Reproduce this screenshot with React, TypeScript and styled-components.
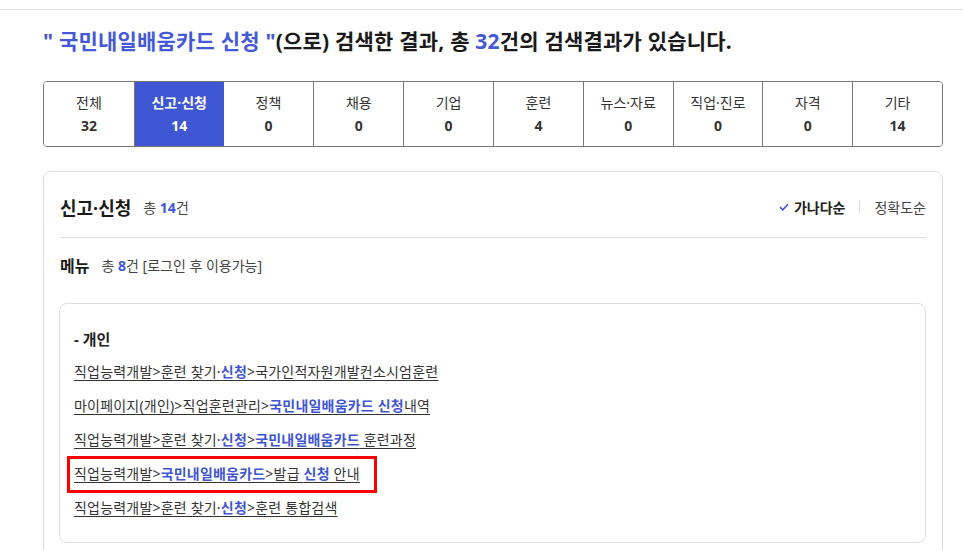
import styled, { createGlobalStyle } from "styled-components";

const GlobalStyle = createGlobalStyle`
  body {
    margin: 0;
    background: #ffffff;
    font-family: "Noto Sans", "Noto Sans CJK KR", sans-serif;
    color: #222222;
  }
  * { box-sizing: border-box; }
`;

const tabs = [
  { label: "전체", count: 32 },
  { label: "신고·신청", count: 14, active: true },
  { label: "정책", count: 0 },
  { label: "채용", count: 0 },
  { label: "기업", count: 0 },
  { label: "훈련", count: 4 },
  { label: "뉴스·자료", count: 0 },
  { label: "직업·진로", count: 0 },
  { label: "자격", count: 0 },
  { label: "기타", count: 14 },
];

type Part = { t: string; hl?: boolean };

const links: { parts: Part[]; marked?: boolean }[] = [
  {
    parts: [
      { t: "직업능력개발>훈련 찾기·" },
      { t: "신청", hl: true },
      { t: ">국가인적자원개발컨소시엄훈련" },
    ],
  },
  {
    parts: [
      { t: "마이페이지(개인)>직업훈련관리>" },
      { t: "국민내일배움카드 신청", hl: true },
      { t: "내역" },
    ],
  },
  {
    parts: [
      { t: "직업능력개발>훈련 찾기·" },
      { t: "신청", hl: true },
      { t: ">" },
      { t: "국민내일배움카드", hl: true },
      { t: " 훈련과정" },
    ],
  },
  {
    parts: [
      { t: "직업능력개발>" },
      { t: "국민내일배움카드", hl: true },
      { t: ">발급 " },
      { t: "신청", hl: true },
      { t: " 안내" },
    ],
    marked: true,
  },
  {
    parts: [
      { t: "직업능력개발>훈련 찾기·" },
      { t: "신청", hl: true },
      { t: ">훈련 통합검색" },
    ],
  },
];

const App = (): JSX.Element => {
  return (
    <>
      <GlobalStyle />
      <TopLine />
      <Page>
        <SearchTitle>
          <Blue>" 국민내일배움카드 신청 "</Blue>(으로) 검색한 결과, 총 <Blue>32</Blue>건의 검색결과가 있습니다.
        </SearchTitle>

        <TabBar>
          {tabs.map((tab) => (
            <Tab key={tab.label} $active={!!tab.active}>
              <TabLabel>{tab.label}</TabLabel>
              <TabCount>{tab.count}</TabCount>
            </Tab>
          ))}
        </TabBar>

        <ResultBox>
          <ResultHead>
            <HeadLeft>
              <ResultTitle>신고·신청</ResultTitle>
              <Total>
                총 <strong>14</strong>건
              </Total>
            </HeadLeft>
            <SortList>
              <SortItem $on>
                <svg width="10" height="8" viewBox="0 0 10 8">
                  <path d="M1 4.2 L3.8 6.8 L9 1.2" fill="none" stroke="#3f56d3" strokeWidth="1.6" />
                </svg>
                가나다순
              </SortItem>
              <SortDivider />
              <SortItem>정확도순</SortItem>
            </SortList>
          </ResultHead>

          <MenuHead>
            <MenuTitle>메뉴</MenuTitle>
            <Total>
              총 <strong>8</strong>건 [로그인 후 이용가능]
            </Total>
          </MenuHead>

          <LinkBox>
            <GroupTitle>- 개인</GroupTitle>
            <LinkList>
              {links.map((link, i) => (
                <LinkRow key={i}>
                  <LinkText href="#" $marked={!!link.marked}>
                    {link.parts.map((p, j) =>
                      p.hl ? <Hl key={j}>{p.t}</Hl> : <span key={j}>{p.t}</span>
                    )}
                  </LinkText>
                </LinkRow>
              ))}
            </LinkList>
          </LinkBox>
        </ResultBox>
      </Page>
    </>
  );
};

export default App;

const TopLine = styled.div`
  height: 10px;
  border-bottom: 1px solid #dddddd;
`;

const Page = styled.main`
  padding: 0 20px 0 43px;
`;

const SearchTitle = styled.h2`
  margin: 16px 0 0 0;
  font-size: 21px;
  line-height: 30px;
  font-weight: 700;
  letter-spacing: 0.2px;
  color: #1a1a1a;
`;

const Blue = styled.span`
  color: #4459d8;
`;

const TabBar = styled.div`
  margin-top: 25px;
  height: 66px;
  display: grid;
  grid-template-columns: repeat(10, 1fr);
  border: 1px solid #777777;
  border-radius: 4px;
  overflow: hidden;
`;

const Tab = styled.div<{ $active: boolean }>`
  display: flex;
  flex-direction: column;
  align-items: center;
  justify-content: center;
  gap: 1px;
  border-left: 1px solid #777777;
  background: ${(p) => (p.$active ? "#3f56d3" : "#ffffff")};
  color: ${(p) => (p.$active ? "#ffffff" : "#333333")};
  font-weight: ${(p) => (p.$active ? 700 : 400)};

  &:first-child {
    border-left: none;
  }

  ${(p) => (p.$active ? "& + div { border-left: none; }" : "")}
`;

const TabLabel = styled.span`
  font-size: 14px;
  line-height: 22px;
`;

const TabCount = styled.span`
  font-size: 14px;
  line-height: 22px;
  font-weight: 700;
`;

const ResultBox = styled.section`
  margin-top: 24px;
  border: 1px solid #dddddd;
  border-radius: 8px;
  padding: 0 16px 0 16px;
  height: 400px;
`;

const ResultHead = styled.div`
  display: flex;
  justify-content: space-between;
  align-items: center;
  height: 66px;
  padding-top: 4px;
  border-bottom: 1px solid #dddddd;
`;

const HeadLeft = styled.div`
  display: flex;
  align-items: center;
  gap: 12px;
`;

const ResultTitle = styled.h3`
  margin: 0;
  font-size: 18px;
  font-weight: 700;
  color: #1a1a1a;
`;

const Total = styled.span`
  font-size: 14px;
  color: #444444;

  strong {
    color: #3f56d3;
    font-weight: 700;
  }
`;

const SortList = styled.div`
  display: flex;
  align-items: center;
  gap: 14px;
`;

const SortItem = styled.span<{ $on?: boolean }>`
  display: flex;
  align-items: center;
  gap: 5px;
  font-size: 14px;
  font-weight: ${(p) => (p.$on ? 700 : 400)};
  color: ${(p) => (p.$on ? "#222222" : "#444444")};
`;

const SortDivider = styled.span`
  width: 1px;
  height: 14px;
  background: #dddddd;
`;

const MenuHead = styled.div`
  display: flex;
  align-items: center;
  gap: 12px;
  margin-top: 17px;
  height: 20px;
`;

const MenuTitle = styled.h4`
  margin: 0;
  font-size: 16px;
  font-weight: 700;
  color: #1a1a1a;
`;

const LinkBox = styled.div`
  margin-top: 28px;
  margin-left: -1px;
  border: 1px solid #dddddd;
  border-radius: 8px;
  padding: 24px 14px 24px 14px;
`;

const GroupTitle = styled.div`
  font-size: 15px;
  font-weight: 700;
  line-height: 22px;
  color: #222222;
`;

const LinkList = styled.ul`
  list-style: none;
  margin: 10px 0 0 0;
  padding: 0;
  display: flex;
  flex-direction: column;
  gap: 12px;
`;

const LinkRow = styled.li`
  line-height: 22px;
  height: 22px;
`;

const LinkText = styled.a<{ $marked: boolean }>`
  position: relative;
  display: inline-block;
  font-size: 14px;
  letter-spacing: 0.2px;
  color: #333333;
  text-decoration: underline;
  text-underline-offset: 3px;

  ${(p) =>
    p.$marked
      ? `&::after {
    content: "";
    position: absolute;
    left: -7px;
    right: -17px;
    top: -7px;
    bottom: -8px;
    border: 3px solid #ff0000;
    pointer-events: none;
  }`
      : ""}
`;

const Hl = styled.span`
  color: #3f56d3;
  font-weight: 700;
`;
